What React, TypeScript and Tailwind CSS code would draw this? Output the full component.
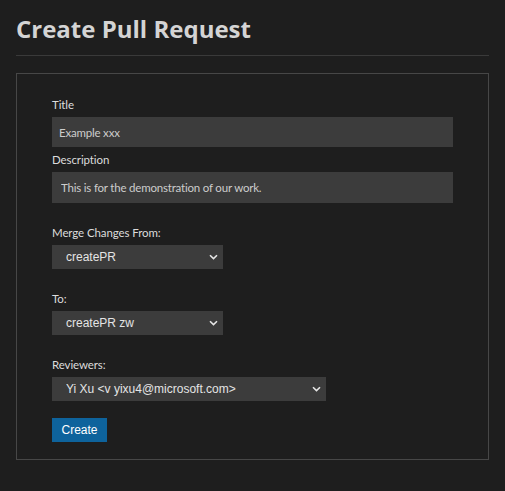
function Chevron() {
  return (
    <svg
      className="pointer-events-none absolute right-[5px] top-1/2 -translate-y-1/2"
      width="9"
      height="6"
      viewBox="0 0 9 6"
      fill="none"
    >
      <path d="M1 1.2 L4.5 4.6 L8 1.2" stroke="#e6e6e6" strokeWidth="1.6" />
    </svg>
  );
}

function Select({ value, width }: { value: string; width: string }) {
  return (
    <div className={`relative mt-[3px] flex ${width}`}>
      <select
        defaultValue={value}
        className="block h-[24px] w-full appearance-none bg-[#3c3c3c] pl-[14px] pr-6 text-[12px] leading-[24px] text-[#e4e4e4] outline-none [font-family:'Liberation_Sans',Arial,sans-serif]"
      >
        <option>{value}</option>
      </select>
      <Chevron />
    </div>
  );
}

const label = 'block text-[11.5px] leading-[18px] tracking-[-0.1px] text-[#dcdcdc]';

export default function App() {
  return (
    <div className="min-h-[491px] w-[505px] bg-[#1e1e1e] px-4 text-[#cccccc] [font-family:'Lato','Noto_Sans',sans-serif]">
      {/* Header */}
      <h1 className="pt-[13px] pb-[11px] text-[24px] font-bold leading-[31px] text-[#d4d4d4] [font-family:'Open_Sans','Noto_Sans',sans-serif]">
        Create Pull Request
      </h1>
      <div className="h-px w-[473px] bg-[#3a3a3a]" />

      {/* Form */}
      <div className="mt-[17px] w-[473px] border border-[#474747] pb-[17px] pl-[35px] pt-[22px]">
        <label className={label}>Title</label>
        <input
          defaultValue="Example xxx"
          className="mt-[3px] block h-[30px] w-[401px] bg-[#3c3c3c] px-[7px] text-[11.5px] tracking-[-0.2px] text-[#cccccc] outline-none"
        />

        <label className={`mt-[4px] ${label}`}>Description</label>
        <input
          defaultValue="This is for the demonstration of our work."
          className="mt-[3px] block h-[31px] w-[401px] bg-[#3c3c3c] px-[9px] text-[11.5px] tracking-[-0.2px] text-[#cccccc] outline-none"
        />

        <label className={`mt-[21px] ${label}`}>Merge Changes From:</label>
        <Select value="createPR" width="w-[171px]" />

        <label className={`mt-[21px] ${label}`}>To:</label>
        <Select value="createPR zw" width="w-[171px]" />

        <label className={`mt-[21px] ${label}`}>Reviewers:</label>
        <Select value="Yi Xu <v yixu4@microsoft.com>" width="w-[274px]" />

        <button className="mt-[17px] block h-[24px] w-[55px] bg-[#0e639c] text-[12px] text-white [font-family:'Liberation_Sans',Arial,sans-serif]">
          Create
        </button>
      </div>
    </div>
  );
}
